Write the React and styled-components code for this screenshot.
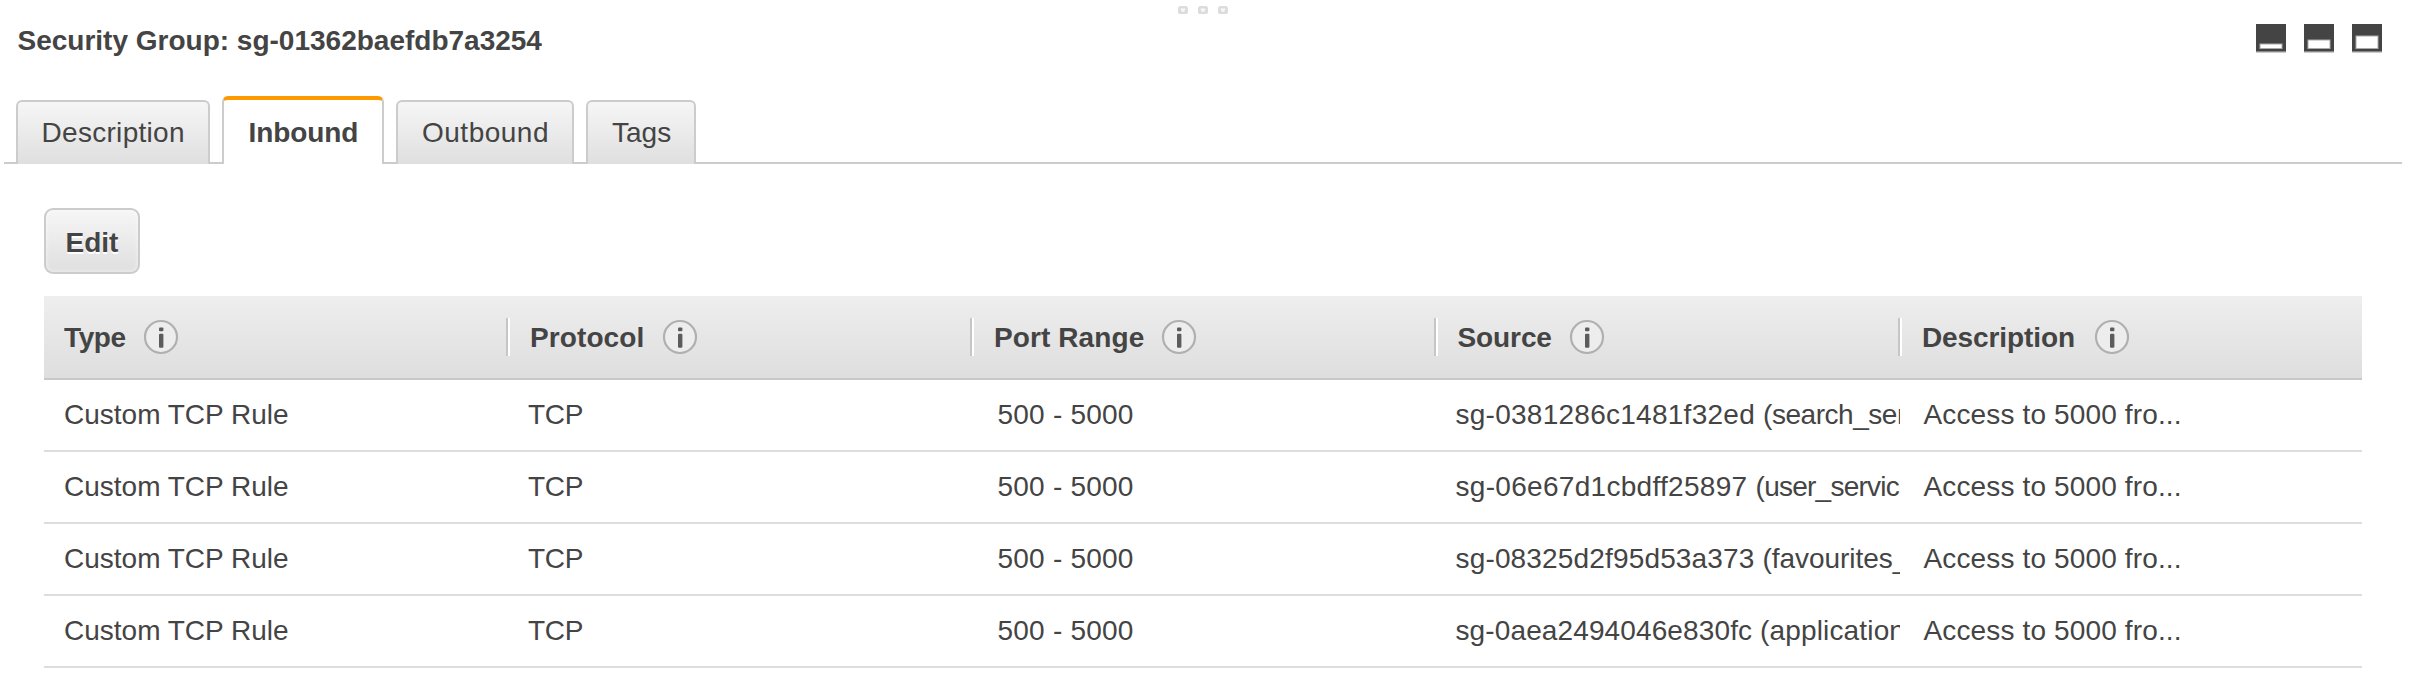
import React from "react";
import styled, { createGlobalStyle } from "styled-components";

const GlobalStyle = createGlobalStyle`
  * { box-sizing: border-box; }
  body {
    margin: 0;
    background: #fff;
    color: #444;
    font-family: "Liberation Sans", Arial, sans-serif;
    font-size: 28px;
    line-height: 32px;
  }
`;

const Panel = styled.main`
  position: relative;
  height: 700px;
  overflow: hidden;
  display: flex;
  flex-direction: column;
`;

const DragHandle = styled.div`
  position: absolute;
  top: 5px;
  left: 1177px;
  display: flex;
  gap: 8px;
`;

const PanelHeader = styled.header`
  display: flex;
  justify-content: space-between;
  align-items: flex-start;
  height: 96px;
  padding: 24px 30px 0 17.5px;
`;

const Title = styled.h1`
  margin: 0;
  padding-top: 1px;
  font-size: 28px;
  line-height: 32px;
  font-weight: 700;
  white-space: nowrap;
`;

const SizeControls = styled.div`
  display: flex;
  gap: 18px;
`;

const SizeButton = styled.button`
  width: 30px;
  height: 30px;
  padding: 0;
  border: 0;
  background: none;
  svg { display: block; }
`;

const TabBar = styled.nav`
  display: flex;
  align-items: flex-end;
  gap: 12px;
  height: 68px;
  margin: 0 10px 0 4px;
  padding-left: 12px;
  background: linear-gradient(#ccc, #ccc) bottom / 100% 2px no-repeat;
`;

const Tab = styled.button`
  display: flex;
  align-items: flex-start;
  width: ${(p) => p.$width}px;
  height: ${(p) => (p.$active ? 68 : 64)}px;
  padding: ${(p) => (p.$active ? 17 : 15)}px 0 0 ${(p) => p.$inset}px;
  border: 2px solid #ccc;
  border-bottom: 0;
  border-top: ${(p) => (p.$active ? "4px solid #f90" : "2px solid #ccc")};
  border-radius: 6px 6px 0 0;
  background: ${(p) => (p.$active ? "#fff" : "linear-gradient(#f6f6f6, #dfdfdf)")};
  color: inherit;
  font: inherit;
  font-weight: ${(p) => (p.$active ? 700 : 400)};
  letter-spacing: ${(p) => p.$tracking || 0}px;
  text-align: left;
  white-space: nowrap;
`;

const Content = styled.section`
  display: flex;
  flex-direction: column;
  align-items: flex-start;
  padding: 44px 50px 0 44px;
`;

const EditButton = styled.button`
  width: 96px;
  height: 66px;
  margin-bottom: 22px;
  padding: 3px 0 0;
  border: 2px solid #ccc;
  border-radius: 9px;
  background: linear-gradient(#f6f6f6, #dfdfdf);
  box-shadow: inset 0 0 5px rgba(255, 255, 255, 0.6);
  color: inherit;
  font: inherit;
  font-weight: 700;
  text-shadow: 0 2px 0 #fff;
`;

const Table = styled.div`
  width: 100%;
`;

const Row = styled.div`
  display: grid;
  grid-template-columns: 462px repeat(4, 464px);
  align-items: center;
  height: 72px;
  border-bottom: 2px solid #ddd;
`;

const HeaderRow = styled(Row)`
  height: 84px;
  border-bottom-color: #c8c8c8;
  background: linear-gradient(#eee, #dedede);
  font-weight: 700;
`;

const HeaderCell = styled.div`
  display: flex;
  align-items: center;
  height: 38px;
  padding-left: ${(p) => p.$inset}px;
  border-left: ${(p) => (p.$first ? 0 : 2)}px solid #c6c6c6;
  box-shadow: ${(p) => (p.$first ? "none" : "inset 2px 0 0 #fff")};
  letter-spacing: ${(p) => p.$tracking}px;
  white-space: nowrap;
`;

const HeaderLabel = styled.span`
  width: ${(p) => p.$width}px;
  padding-top: 2px;
`;

const Cell = styled.div`
  padding-left: ${(p) => p.$inset}px;
  margin-right: ${(p) => (p.$clip ? -2 : 0)}px;
  letter-spacing: ${(p) => p.$tracking || 0}px;
  white-space: nowrap;
  overflow: hidden;
`;

const GroupName = styled.span`
  letter-spacing: ${(p) => p.$tracking}px;
`;

function SizeIcon({ top }) {
  return (
    <svg width="30" height="30" viewBox="0 0 30 30">
      <rect y="27" width="30" height="2" fill="#ccc" />
      <rect width="30" height="27.5" fill="#444" />
      <rect x="3.5" y={top - 0.5} width="23" height={25.5 - top} fill="#aaa" />
      <rect x="4.5" y={top + 0.5} width="21" height={23.5 - top} fill="#fff" />
    </svg>
  );
}

function GripDot() {
  return (
    <svg width="12" height="10" viewBox="0 0 12 10">
      <rect x="1" y="1" width="10" height="8" rx="2.6" fill="#dcdcdc" />
      <path d="M3.4 3.4h5.2L7.2 6.8H4.8z" fill="#f8f8f8" />
    </svg>
  );
}

function InfoIcon() {
  return (
    <svg width="36" height="36" viewBox="0 0 36 36">
      <circle cx="18" cy="18" r="16" fill="#ededed" stroke="#b0b0b0" strokeWidth="2.2" />
      <rect x="16" y="8.6" width="4.4" height="3.6" rx="1" fill="#5c5c5c" />
      <rect x="16" y="14.8" width="4.4" height="14" rx="1" fill="#5c5c5c" />
    </svg>
  );
}

const tabs = [
  { label: "Description", width: 194, inset: 23.5, tracking: 0.3 },
  { label: "Inbound", width: 162, inset: 24.5, active: true, tracking: -0.1 },
  { label: "Outbound", width: 178, inset: 24, tracking: 0.5 },
  { label: "Tags", width: 110, inset: 24 },
];

const columns = [
  { label: "Type", inset: 20, width: 79, tracking: -0.4 },
  { label: "Protocol", inset: 22, width: 131.5, tracking: 0.1 },
  { label: "Port Range", inset: 22, width: 166.5, tracking: 0.1 },
  { label: "Source", inset: 21.5, width: 111.5, tracking: -0.1 },
  { label: "Description", inset: 22, width: 171.5, tracking: -0.1 },
];

const sources = [
  { id: "sg-0381286c1481f32ed", tracking: 0.26, name: "(search_service)", nameTracking: -0.46 },
  { id: "sg-06e67d1cbdff25897", tracking: 0.3, name: "(user_service)", nameTracking: -0.75 },
  { id: "sg-08325d2f95d53a373", tracking: 0.16, name: "(favourites_service)", nameTracking: -0.05 },
  { id: "sg-0aea2494046e830fc", tracking: 0.12, name: "(application)", nameTracking: 0.15 },
];

export default function App() {
  return (
    <>
      <GlobalStyle />
      <Panel>
        <DragHandle>
          <GripDot />
          <GripDot />
          <GripDot />
        </DragHandle>
        <PanelHeader>
          <Title>Security Group: sg-01362baefdb7a3254</Title>
          <SizeControls>
            {[20, 16, 12].map((top) => (
              <SizeButton key={top}>
                <SizeIcon top={top} />
              </SizeButton>
            ))}
          </SizeControls>
        </PanelHeader>
        <TabBar>
          {tabs.map((t) => (
            <Tab key={t.label} $width={t.width} $inset={t.inset} $active={t.active} $tracking={t.tracking}>
              {t.label}
            </Tab>
          ))}
        </TabBar>
        <Content>
          <EditButton>Edit</EditButton>
          <Table>
            <HeaderRow>
              {columns.map((c, i) => (
                <HeaderCell key={c.label} $first={i === 0} $inset={c.inset} $tracking={c.tracking}>
                  <HeaderLabel $width={c.width}>{c.label}</HeaderLabel>
                  <InfoIcon />
                </HeaderCell>
              ))}
            </HeaderRow>
            {sources.map((s) => (
              <Row key={s.id}>
                <Cell $inset={20}>Custom TCP Rule</Cell>
                <Cell $inset={22} $tracking={-0.3}>TCP</Cell>
                <Cell $inset={27.5} $tracking={0.22}>500 - 5000</Cell>
                <Cell $inset={21.5} $tracking={s.tracking} $clip>
                  {s.id} <GroupName $tracking={s.nameTracking}>{s.name}</GroupName>
                </Cell>
                <Cell $inset={25.5} $tracking={0.14}>Access to 5000 fro...</Cell>
              </Row>
            ))}
          </Table>
        </Content>
      </Panel>
    </>
  );
}
